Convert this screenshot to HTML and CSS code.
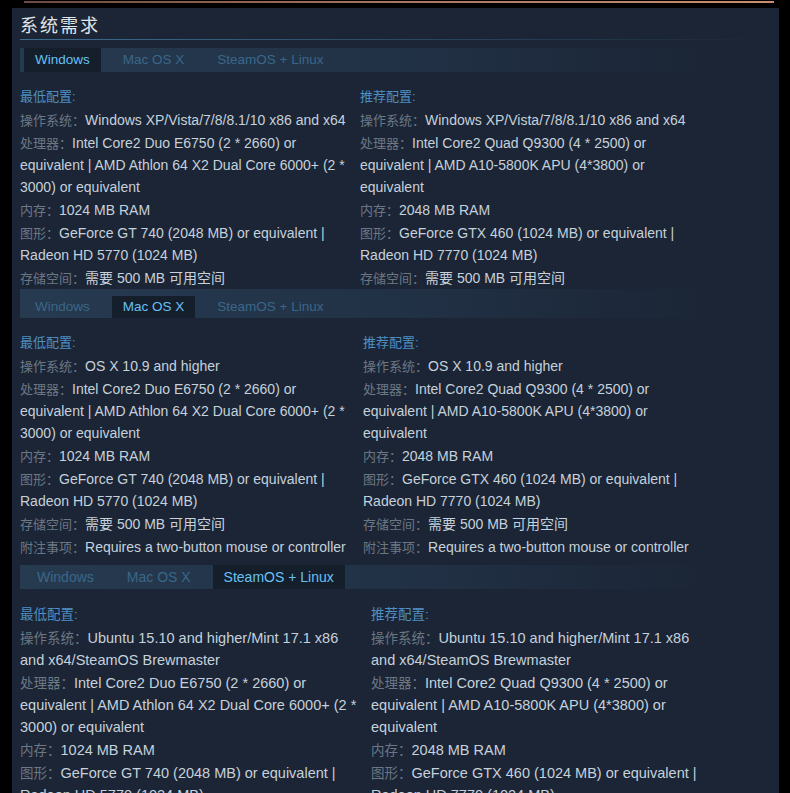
FILE: index.html
```html
<!DOCTYPE html>
<html lang="zh">
<head>
    <meta charset="UTF-8">
    <meta name="viewport" content="width=device-width, initial-scale=1.0">
    <title>系统需求</title>
    <link rel="stylesheet" href="styles.css">
</head>
<body>
    <div class="top-line"></div>
    <div class="panel">
        <h2 class="title">系统需求</h2>

        <!-- Windows -->
        <div class="sysreq sysreq-win">
            <div class="tabs">
                <span class="tab active">Windows</span>
                <span class="tab">Mac OS X</span>
                <span class="tab">SteamOS + Linux</span>
            </div>
            <div class="cols">
                <div class="col">
                    <div class="head">最低配置:</div>
                    <div class="row"><span class="label">操作系统：</span>Windows XP/Vista/7/8/8.1/10 x86 and x64</div>
                    <div class="row"><span class="label">处理器：</span>Intel Core2 Duo E6750 (2 * 2660) or<br>equivalent | AMD Athlon 64 X2 Dual Core 6000+ (2 *<br>3000) or equivalent</div>
                    <div class="row"><span class="label">内存：</span>1024 MB RAM</div>
                    <div class="row"><span class="label">图形：</span>GeForce GT 740 (2048 MB) or equivalent |<br>Radeon HD 5770 (1024 MB)</div>
                    <div class="row"><span class="label">存储空间：</span>需要 500 MB 可用空间</div>
                </div>
                <div class="col">
                    <div class="head">推荐配置:</div>
                    <div class="row"><span class="label">操作系统：</span>Windows XP/Vista/7/8/8.1/10 x86 and x64</div>
                    <div class="row"><span class="label">处理器：</span>Intel Core2 Quad Q9300 (4 * 2500) or<br>equivalent | AMD A10-5800K APU (4*3800) or<br>equivalent</div>
                    <div class="row"><span class="label">内存：</span>2048 MB RAM</div>
                    <div class="row"><span class="label">图形：</span>GeForce GTX 460 (1024 MB) or equivalent |<br>Radeon HD 7770 (1024 MB)</div>
                    <div class="row"><span class="label">存储空间：</span>需要 500 MB 可用空间</div>
                </div>
            </div>
        </div>

        <!-- Mac -->
        <div class="sysreq sysreq-mac">
            <div class="tabs">
                <span class="tab">Windows</span>
                <span class="tab active">Mac OS X</span>
                <span class="tab">SteamOS + Linux</span>
            </div>
            <div class="cols">
                <div class="col">
                    <div class="head">最低配置:</div>
                    <div class="row"><span class="label">操作系统：</span>OS X 10.9 and higher</div>
                    <div class="row"><span class="label">处理器：</span>Intel Core2 Duo E6750 (2 * 2660) or<br>equivalent | AMD Athlon 64 X2 Dual Core 6000+ (2 *<br>3000) or equivalent</div>
                    <div class="row"><span class="label">内存：</span>1024 MB RAM</div>
                    <div class="row"><span class="label">图形：</span>GeForce GT 740 (2048 MB) or equivalent |<br>Radeon HD 5770 (1024 MB)</div>
                    <div class="row"><span class="label">存储空间：</span>需要 500 MB 可用空间</div>
                    <div class="row"><span class="label">附注事项：</span>Requires a two-button mouse or controller</div>
                </div>
                <div class="col">
                    <div class="head">推荐配置:</div>
                    <div class="row"><span class="label">操作系统：</span>OS X 10.9 and higher</div>
                    <div class="row"><span class="label">处理器：</span>Intel Core2 Quad Q9300 (4 * 2500) or<br>equivalent | AMD A10-5800K APU (4*3800) or<br>equivalent</div>
                    <div class="row"><span class="label">内存：</span>2048 MB RAM</div>
                    <div class="row"><span class="label">图形：</span>GeForce GTX 460 (1024 MB) or equivalent |<br>Radeon HD 7770 (1024 MB)</div>
                    <div class="row"><span class="label">存储空间：</span>需要 500 MB 可用空间</div>
                    <div class="row"><span class="label">附注事项：</span>Requires a two-button mouse or controller</div>
                </div>
            </div>
        </div>

        <!-- SteamOS + Linux -->
        <div class="sysreq sysreq-linux">
            <div class="tabs">
                <span class="tab">Windows</span>
                <span class="tab">Mac OS X</span>
                <span class="tab active">SteamOS + Linux</span>
            </div>
            <div class="cols">
                <div class="col">
                    <div class="head">最低配置:</div>
                    <div class="row"><span class="label">操作系统：</span>Ubuntu 15.10 and higher/Mint 17.1 x86<br>and x64/SteamOS Brewmaster</div>
                    <div class="row"><span class="label">处理器：</span>Intel Core2 Duo E6750 (2 * 2660) or<br>equivalent | AMD Athlon 64 X2 Dual Core 6000+ (2 *<br>3000) or equivalent</div>
                    <div class="row"><span class="label">内存：</span>1024 MB RAM</div>
                    <div class="row"><span class="label">图形：</span>GeForce GT 740 (2048 MB) or equivalent |<br>Radeon HD 5770 (1024 MB)</div>
                    <div class="row"><span class="label">存储空间：</span>需要 500 MB 可用空间</div>
                </div>
                <div class="col">
                    <div class="head">推荐配置:</div>
                    <div class="row"><span class="label">操作系统：</span>Ubuntu 15.10 and higher/Mint 17.1 x86<br>and x64/SteamOS Brewmaster</div>
                    <div class="row"><span class="label">处理器：</span>Intel Core2 Quad Q9300 (4 * 2500) or<br>equivalent | AMD A10-5800K APU (4*3800) or<br>equivalent</div>
                    <div class="row"><span class="label">内存：</span>2048 MB RAM</div>
                    <div class="row"><span class="label">图形：</span>GeForce GTX 460 (1024 MB) or equivalent |<br>Radeon HD 7770 (1024 MB)</div>
                    <div class="row"><span class="label">存储空间：</span>需要 500 MB 可用空间</div>
                </div>
            </div>
        </div>
    </div>
</body>
</html>
```

FILE: styles.css
```css
body {
    margin: 0;
    background-color: #000;
    font-family: "Liberation Sans", Arial, "Noto Sans CJK SC", sans-serif;
    color: #c6d1db;
    overflow: hidden;
}
.top-line {
    height: 2px;
    margin: 1px 16px 0 24px;
    background: linear-gradient(to right, #6b4a3f, #a77765 50%, #c98e72);
}
.panel {
    margin: 5px 11px 0 12px;
    padding: 0 8px 40px 8px;
    background-color: #1b2536;
    min-height: 800px;
}
.title {
    margin: 0;
    padding: 4px 0 3px 0;
    font-family: "Noto Sans CJK SC", sans-serif;
    font-size: 18px;
    font-weight: normal;
    line-height: 24px;
    letter-spacing: 2px;
    color: #e2e5e8;
    border-bottom: 1px solid;
    border-image: linear-gradient(to right, #3c6f93, #2a4a62 50%, rgba(42, 74, 98, 0)) 1;
}
.sysreq-win {
    margin-top: 8px;
}
.sysreq-linux {
    margin-top: 7px;
}
.tabs {
    display: flex;
    align-items: flex-end;
    height: 24px;
    padding-left: 4px;
    background: linear-gradient(to right, #263a50 0%, rgba(38, 58, 80, 0.6) 50%, rgba(38, 58, 80, 0) 92%);
}
.sysreq-mac .tabs {
    height: 29px;
}
.sysreq-linux .tabs {
    padding-left: 6px;
}
.tab {
    padding: 0 11px;
    margin-right: 11px;
    font-size: 13.5px;
    line-height: 24px;
    color: #3a6789;
    white-space: nowrap;
}
.sysreq-mac .tab {
    line-height: 22px;
}
.sysreq-linux .tab {
    font-size: 14px;
}
.tab.active {
    background-color: #151e2b;
    color: #67c1f5;
}
.cols {
    display: grid;
    grid-template-columns: 340px 1fr;
    margin-top: 14px;
}
.sysreq-mac .cols {
    grid-template-columns: 343px 1fr;
}
.sysreq-linux .cols {
    grid-template-columns: 351px 1fr;
    margin-top: 15px;
}
.col {
    font-size: 14px;
    line-height: 22px;
    white-space: nowrap;
}
.sysreq-linux .col {
    font-size: 14.5px;
}
.row {
    margin-top: 1px;
}
.head {
    font-size: 13px;
    color: #4f8fc2;
}
.label {
    font-size: 13px;
    line-height: 1;
    color: #6c7784;
}
.sysreq-linux .head,
.sysreq-linux .label {
    font-size: 13.5px;
}
```
